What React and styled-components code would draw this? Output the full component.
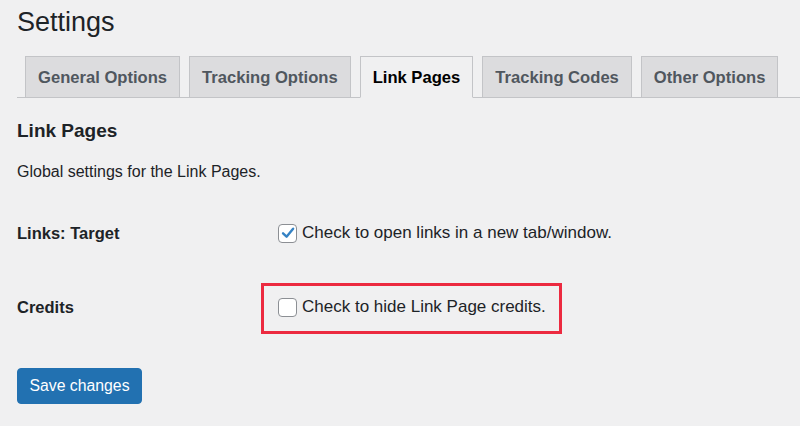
import React from "react";
import styled, { createGlobalStyle } from "styled-components";

const Global = createGlobalStyle`
  html, body { margin: 0; padding: 0; background: #f0f0f1; }
  body { font-family: "Liberation Sans", Arial, sans-serif; color: #1d2327; }
  * { box-sizing: border-box; }
`;

const Page = styled.div`
  padding: 0 0 0 17px;
  height: 426px;
  overflow: hidden;
`;

const Title = styled.h1`
  margin: 4px 0 0;
  font-size: 27px;
  font-weight: 400;
  line-height: 36px;
  color: #1d2327;
`;

const TabNav = styled.nav`
  margin-top: 16px;
  display: flex;
  align-items: flex-end;
  gap: 9px;
  padding-left: 8px;
  height: 42px;
  border-bottom: 1px solid #c3c4c7;
`;

const Tab = styled.div`
  height: 42px;
  margin-bottom: -1px;
  padding: 1px 12px 0;
  display: flex;
  align-items: center;
  border: 1px solid #c3c4c7;
  border-bottom-color: ${(p) => (p.$active ? "#f0f0f1" : "#c3c4c7")};
  background: ${(p) => (p.$active ? "#f0f0f1" : "#dcdcde")};
  color: ${(p) => (p.$active ? "#000" : "#50575e")};
  font-size: 16.6px;
  font-weight: 700;
  white-space: nowrap;
`;

const SectionTitle = styled.h2`
  margin: 21px 0 0;
  font-size: 19px;
  font-weight: 700;
  line-height: 24px;
`;

const Description = styled.p`
  margin: 18px 0 0;
  font-size: 16px;
  line-height: 22px;
`;

const FormTable = styled.div`
  margin-top: 13px;
  display: grid;
  grid-template-columns: 261px 1fr;
`;

const Row = styled.div`
  display: contents;
`;

const Label = styled.div`
  height: 74px;
  display: flex;
  align-items: center;
  font-size: 16.5px;
  font-weight: 700;
`;

const Field = styled.div`
  height: 74px;
  display: flex;
  align-items: center;
`;

const CheckLabel = styled.label`
  position: relative;
  display: inline-flex;
  align-items: center;
  gap: 5px;
  font-size: 17px;
  line-height: 20px;
  color: #1d2327;

  ${(p) =>
    p.$highlighted &&
    `
    &::after {
      content: "";
      position: absolute;
      top: -14px;
      right: -16px;
      bottom: -17px;
      left: -17px;
      border: 3px solid #ec2a40;
      pointer-events: none;
    }
  `}
`;

const Box = styled.span`
  width: 19px;
  height: 19px;
  border: 1px solid #8c8f94;
  border-radius: 4px;
  background: #fff;
  display: inline-flex;
  align-items: center;
  justify-content: center;
  flex: none;
`;

const SaveButton = styled.button`
  margin-top: 24px;
  height: 36px;
  width: 125px;
  padding: 0;
  border: 1px solid #2271b1;
  border-radius: 4px;
  background: #2271b1;
  color: #fff;
  font-family: "Liberation Sans", Arial, sans-serif;
  font-size: 15.8px;
  cursor: pointer;
`;

function Checkbox({ checked }) {
  return (
    <Box>
      {checked && (
        <svg width="16" height="16" viewBox="0 0 20 20">
          <path
            d="M3.8 10.4 L8.2 14.6 L16.4 4.6"
            fill="none"
            stroke="#3582c4"
            strokeWidth="3"
            strokeLinecap="round"
            strokeLinejoin="round"
          />
        </svg>
      )}
    </Box>
  );
}

const tabs = ["General Options", "Tracking Options", "Link Pages", "Tracking Codes", "Other Options"];

export default function App() {
  return (
    <>
      <Global />
      <Page>
        <Title>Settings</Title>
        <TabNav>
          {tabs.map((t) => (
            <Tab key={t} $active={t === "Link Pages"}>
              {t}
            </Tab>
          ))}
        </TabNav>
        <SectionTitle>Link Pages</SectionTitle>
        <Description>Global settings for the Link Pages.</Description>
        <FormTable>
          <Row>
            <Label>Links: Target</Label>
            <Field>
              <CheckLabel>
                <Checkbox checked />
                Check to open links in a new tab/window.
              </CheckLabel>
            </Field>
          </Row>
          <Row>
            <Label>Credits</Label>
            <Field>
              <CheckLabel $highlighted>
                <Checkbox />
                Check to hide Link Page credits.
              </CheckLabel>
            </Field>
          </Row>
        </FormTable>
        <SaveButton>Save changes</SaveButton>
      </Page>
    </>
  );
}
